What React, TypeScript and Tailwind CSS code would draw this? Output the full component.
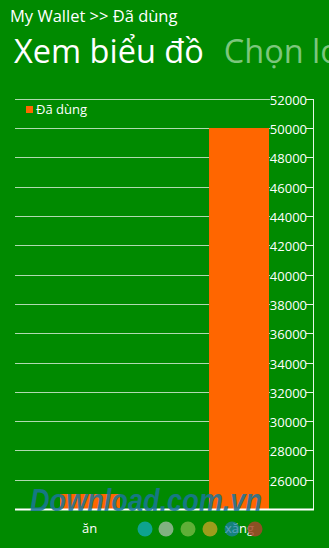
import React from "react";

const ticks = Array.from({ length: 14 }, (_, i) => 52000 - i * 2000);
const yOf = (v: number) => 509 - ((v - 24000) / 2000) * 29.3;

export default function App() {
  return (
    <div className="w-[329px] h-[548px] bg-[#008a00] overflow-hidden relative" style={{ fontFamily: '"Open Sans", "Noto Sans", sans-serif' }}>
      <div className="pl-[10px] pt-[6px] text-white text-[16.5px] leading-[20px] whitespace-nowrap">My Wallet &gt;&gt; Đã dùng</div>
      <div className="flex gap-[20px] pl-[14px] pt-[5px] text-[32.5px] leading-[40px] whitespace-nowrap">
        <span className="text-white">Xem biểu đồ</span>
        <span className="text-[#7cc67c]">Chọn loại</span>
      </div>
      <svg width="329" height="477" viewBox="0 71 329 477" className="block">
        {ticks.map((v) => {
          const y = Math.round(yOf(v)) + 0.5;
          return (
            <g key={v}>
              {v > 24000 && <line x1={15} x2={270} y1={y} y2={y} stroke="#b0dab0" strokeWidth={1} />}
              <line x1={306} x2={313} y1={y} y2={y} stroke="#e6f4e6" strokeWidth={1} />
              {v > 24000 && (
                <text x={307} y={y + 5} textAnchor="end" fill="#ffffff" fontSize="13" fontFamily="Open Sans, sans-serif">
                  {v}
                </text>
              )}
            </g>
          );
        })}
        <rect x={209} y={Math.round(yOf(50000))} width={60} height={509 - Math.round(yOf(50000))} fill="#ff6600" />
        <rect x={60} y={494} width={60} height={15} fill="#ff6600" />
        <line x1={313.5} x2={313.5} y1={99} y2={510} stroke="#e6f4e6" strokeWidth={1} />
        <line x1={15} x2={314} y1={509.5} y2={509.5} stroke="#ffffff" strokeWidth={2} />
        <rect x={26} y={106} width={7} height={7} fill="#ff6600" />
        <text x={36} y={114} fill="#ffffff" fontSize="13" fontFamily="Open Sans, sans-serif">Đã dùng</text>
        <text x={82} y={533} fill="#ffffff" fontSize="13" fontFamily="Open Sans, sans-serif">ăn</text>
        <text x={225} y={533} fill="#ffffff" fontSize="13" fontFamily="Open Sans, sans-serif">xăng</text>
        <circle cx={145} cy={529} r={7.5} fill="#10a59e" opacity={0.9} />
        <circle cx={166} cy={529} r={7.5} fill="#8fb58f" opacity={0.9} />
        <circle cx={188} cy={529} r={7.5} fill="#69b33d" opacity={0.9} />
        <circle cx={210} cy={529} r={7.5} fill="#ad9f1f" opacity={0.9} />
        <circle cx={232} cy={529} r={7.5} fill="#1c7fa5" opacity={0.75} />
        <circle cx={255} cy={529} r={7.5} fill="#a3472a" opacity={0.85} />
        <text x={30} y={511} fill="#1a7599" opacity={0.85} fontSize="32" fontWeight="bold" fontStyle="italic" fontFamily="Liberation Sans, sans-serif" textLength={232} lengthAdjust="spacingAndGlyphs">
          Download.com.vn
        </text>
      </svg>
    </div>
  );
}
